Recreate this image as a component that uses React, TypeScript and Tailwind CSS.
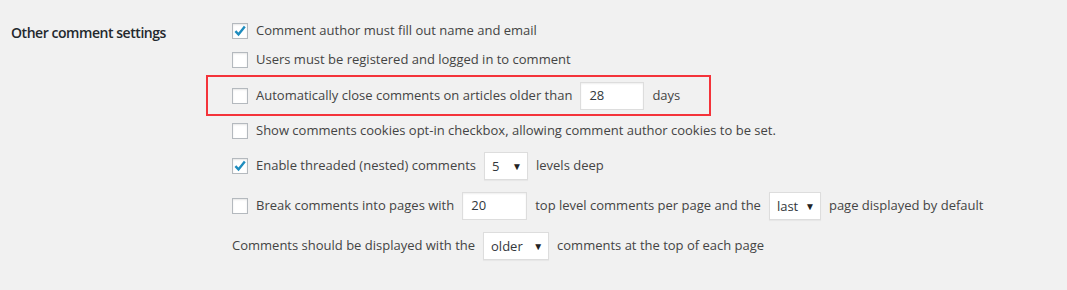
const Box = ({ checked }: { checked?: boolean }) => (
  <span className="relative inline-block w-4 h-4 mr-2 shrink-0 bg-white border border-[#b4b9be] shadow-[inset_0_1px_2px_rgba(0,0,0,0.1)]">
    {checked && (
      <svg viewBox="0 0 16 16" className="absolute -left-px -top-px w-4 h-4">
        <path d="M3.4 8.2 L6.5 11.4 L12.8 3.4" fill="none" stroke="#1e8cbe" strokeWidth="2.4" />
      </svg>
    )}
  </span>
);

const TextBox = ({ value, w }: { value: string; w: string }) => (
  <span className={`inline-flex items-center h-7 ${w} mx-2 pl-2 bg-white border border-[#ddd] shadow-[inset_0_1px_2px_rgba(0,0,0,0.07)] text-[#32373c]`}>
    {value}
  </span>
);

const Select = ({ value, w }: { value: string; w: string }) => (
  <span className={`inline-flex items-center justify-between h-7 ${w} mx-2 pl-[7px] pr-[5px] bg-white border border-[#ddd] shadow-[0_1px_1px_rgba(0,0,0,0.04)] text-[#32373c]`}>
    <span className="pt-[2px]">{value}</span>
    <span className="text-[10px] text-[#222] leading-none">▼</span>
  </span>
);

export default function App() {
  return (
    <div className="w-[1067px] h-[290px] bg-[#f1f1f1] text-[#444] text-[13px] font-['Open_Sans',sans-serif] flex">
      <div className="w-[221px] pl-[11px] pt-[22px] text-[14px] font-semibold tracking-[-0.45px] text-[#23282d]">
        Other comment settings
      </div>
      <div className="flex flex-col pt-[17px] pl-[11px]">
        <div className="h-7 flex items-center">
          <Box checked />
          Comment author must fill out name and email
        </div>
        <div className="h-7 mt-px flex items-center">
          <Box />
          Users must be registered and logged in to comment
        </div>
        <div className="relative h-7 mt-2 flex items-center">
          <div className="absolute left-[-26px] top-[-7px] w-[505px] h-[41px] border-2 border-[#f4333a]" />
          <Box />
          Automatically close comments on articles older than
          <TextBox value="28" w="w-16" />
          days
        </div>
        <div className="h-7 mt-[7px] flex items-center">
          <Box />
          Show comments cookies opt-in checkbox, allowing comment author cookies to be set.
        </div>
        <div className="h-7 mt-[7px] flex items-center">
          <Box checked />
          Enable threaded (nested) comments
          <Select value="5" w="w-11" />
          levels deep
        </div>
        <div className="h-7 mt-3 flex items-center">
          <Box />
          Break comments into pages with
          <TextBox value="20" w="w-[65px]" />
          top level comments per page and the
          <Select value="last" w="w-[52px]" />
          page displayed by default
        </div>
        <div className="h-7 mt-3 flex items-center">
          Comments should be displayed with the
          <Select value="older" w="w-[66px]" />
          comments at the top of each page
        </div>
      </div>
    </div>
  );
}
